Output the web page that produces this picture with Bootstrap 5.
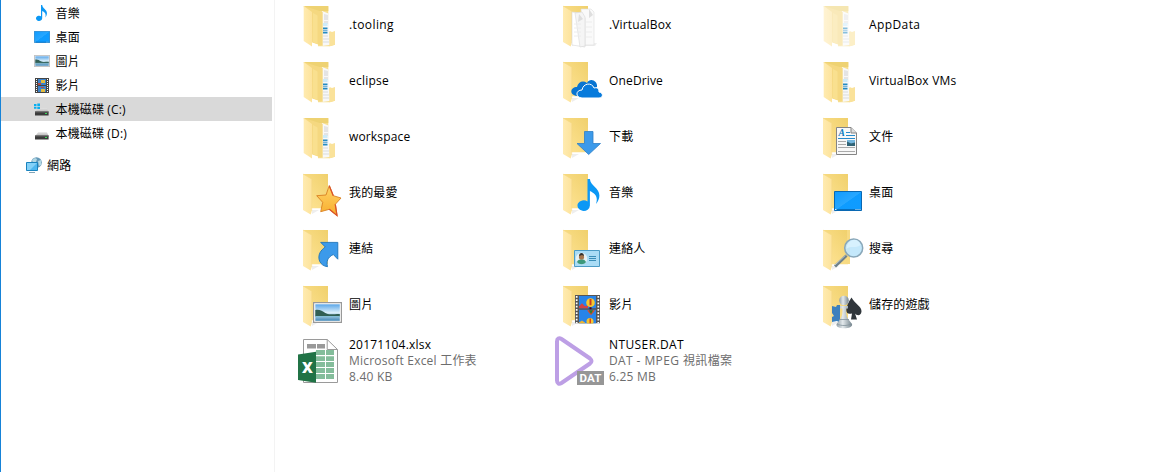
<!DOCTYPE html>
<html lang="zh-Hant">
<head>
<meta charset="utf-8">
<title>本機磁碟 (C:)</title>
<link href="https://cdn.jsdelivr.net/npm/bootstrap@5.3.0/dist/css/bootstrap.min.css" rel="stylesheet">
<style>
body{font:12px/16px "Open Sans","Noto Sans CJK TC",sans-serif;color:#000;background:#fff;height:472px;letter-spacing:.15px}
.tree{width:275px;border-left:1px solid #1683d8;border-right:1px solid #f3f3f3;padding-top:1px}
.tree-row{height:24px;width:271px;padding-left:33px;gap:5.5px}
.tree-row span{padding-top:1px}
.tree-row svg{width:16px;height:16px;flex:none}
.tree-row.picked{background:#d9d9d9}
.tree-row.root{padding-left:25px;margin-top:8px;gap:5px}
.files{display:grid;grid-template-columns:repeat(3,260px);grid-auto-rows:56px;margin-left:20px}
.tile{height:50px;gap:4px}
.tile>svg{width:50px;height:50px;flex:none;overflow:visible}
.meta{color:#6d6d6d}
.wide{letter-spacing:.4px}
.mid{letter-spacing:.22px}
</style>
</head>
<body class="d-flex overflow-hidden">
<svg width="0" height="0" class="position-absolute" aria-hidden="true">
<defs>
<linearGradient id="back" x1="0" y1="1" x2="1" y2="0"><stop offset="0" stop-color="#ffe597"/><stop offset="1" stop-color="#f0d06c"/></linearGradient>
<linearGradient id="flap" x1="0" y1="0" x2="1" y2="0"><stop offset="0" stop-color="#ffebb0"/><stop offset="1" stop-color="#fde39c"/></linearGradient>
<linearGradient id="blue" x1="0" y1="0" x2="1" y2="1"><stop offset="0" stop-color="#0f9bff"/><stop offset=".5" stop-color="#27a7ff"/><stop offset=".52" stop-color="#0e9cff"/><stop offset="1" stop-color="#109bff"/></linearGradient>
<linearGradient id="sky" x1="0" y1="0" x2="0" y2="1"><stop offset="0" stop-color="#5ba6e8"/><stop offset=".5" stop-color="#d9eefa"/><stop offset="1" stop-color="#4389b8"/></linearGradient>
<linearGradient id="gold" x1="0" y1="0" x2="0" y2="1"><stop offset="0" stop-color="#ffd467"/><stop offset="1" stop-color="#f8ad2d"/></linearGradient>
<linearGradient id="pawn" x1="0" y1="0" x2="1" y2="0"><stop offset="0" stop-color="#93a0a7"/><stop offset=".4" stop-color="#e3e9ec"/><stop offset="1" stop-color="#74848d"/></linearGradient>
<linearGradient id="metal" x1="0" y1="0" x2="0" y2="1"><stop offset="0" stop-color="#e2e2e2"/><stop offset="1" stop-color="#b4b4b4"/></linearGradient>
<symbol id="folder" viewBox="0 0 50 50">
<path d="M17 46l7-4h-7z" fill="#eee"/><path d="M8 6h25v34.300H13z" fill="url(#back)"/><path d="M8 6l8.700 5.200V43l-1 3.500L8 42z" fill="url(#flap)"/><path d="M8 6l8.700 5.200V43" fill="none" stroke="#f4d988" stroke-width=".5"/>
</symbol>
<symbol id="filled" viewBox="0 0 50 50">
<path d="M22 6.300h11.300V32H40v12.800l-5 1.500H23z" fill="#f7de8e"/><path d="M8.700 6h24.600v5H16z" fill="#eed272"/>
<path d="M27 11l6.500 2.500 1.200 31.500-8 1z" fill="#f8f8f8"/><path d="M29 14l4 1v5h-4zm0 7h4v3h-4z" fill="#e4e4e4"/><path d="M28 23h4.500v3H28z" fill="#cdebf8"/><path d="M28 27.500h4.500v1.500H28zM28 32h4.500v1.500H28z" fill="#268cc1"/><path d="M28 29.500h4.500v2H28z" fill="#75b4d8"/><path d="M28 36h5m-5 3h6m-6 3h6" stroke="#d9dcdd"/>
<path d="M34.500 31l2.500 1 3-1v13.800l-5.500 1.500z" fill="#fae29a"/>
<path d="M8.700 6l19 6v34l-10.400-3.500-3-2z" fill="#f5d880"/><path d="M18 13l4.500 2.500V44l-5-2z" fill="#f9e08f"/>
<path d="M8.700 6L17 12v34.500L8.700 41z" fill="url(#flap)"/>
</symbol>
<symbol id="note" viewBox="0 0 24 32"><path d="M11 0h2.400c.6 7 9.500 9 9.500 16.500 0 3-1.200 5.700-3.400 8.500 2.200-7.200-.3-10.200-6.100-13v14.500a6.200 5.300 0 1 1-2.400-4.100z" fill="#0b98f5"/></symbol>
<symbol id="desk" viewBox="0 0 28 20" preserveAspectRatio="none"><path d="M.5.5h27v19H.5z" fill="url(#blue)" stroke="#0968b3"/><path d="M1 18.500h26" stroke="#086fbd"/><path d="M1 18.500h1.500m19 0h1m1 0h1m1 0h1" stroke="#d8f2ff"/></symbol>
<symbol id="photo" viewBox="0 0 29 21" preserveAspectRatio="none"><path d="M.6.600h27.800v19.800H.6z" fill="#fff" stroke="#999" stroke-width="1.200"/><path d="M2.300 2.300h24.500v16.500H2.300z" fill="url(#sky)"/><path d="M2.300 8c4-1 7 1 10 3s7 1 14.500 1v2.500H2.300z" fill="#315f54"/><path d="M2.300 14.500h24.500" stroke="#83bfd6"/></symbol>
<symbol id="film" viewBox="0 0 25 28" preserveAspectRatio="none"><path d="M0 0h25v28H0z" fill="#555"/><path d="M1.700 1v27M23.300 1v27" stroke="#fff" stroke-width="1.700" stroke-dasharray="1.700 1.500"/><path d="M4 1h17v12H4zM4 14.500h17V28H4z" fill="#2884e9"/><path d="M4 13v-2l3-3 3 3 3-1v3z" fill="#d44346"/><circle cx="15.500" cy="7.500" r="4.300" fill="#f4c830"/><path d="M14.500 4h2v6h-2z" fill="#ce3f1e"/><path d="M15.500 12v2" stroke="#402" stroke-width="2"/><path d="M12 15h8l-4 5z" fill="#e1492b"/><path d="M14 15h4l-2 4z" fill="#2c7c35"/><path d="M4 27l3-2 3 2v1H4z" fill="#edb431"/><circle cx="15" cy="26" r="3.500" fill="#f6c52e"/><path d="M14.500 23h1.500v5h-1.500z" fill="#db431d"/></symbol>
<symbol id="smallfilm" viewBox="0 0 14 15"><path d="M0 0h14v15H0z" fill="#444"/><path d="M1.500 1v14M12.500 1v14" stroke="#fff" stroke-width="1" stroke-dasharray="1 1"/><path d="M3 1h8v6H3zM3 8h8v6H3z" fill="#3b82cb"/><path d="M3 5h3v2H3zM6 9h3v1H6z" fill="#b54b46"/><path d="M6 2h4v3H6zM6 11h4v3H6z" fill="#e4bc3d"/></symbol>
<symbol id="drive" viewBox="0 0 16 16"><path d="M4.200 7.200h8.700l2 4H1z" fill="url(#metal)"/><path d="M1 10.600h13.600v3.900H1z" fill="#3b3b3b"/><path d="M1 11h13.600" stroke="#626262"/><path d="M11 12h2v1h-2z" fill="#37da59"/></symbol>
</defs>
</svg>

<nav class="tree flex-shrink-0 d-flex flex-column">
<div class="tree-row d-flex align-items-center"><svg><use href="#note" x="1" y="0" width="13" height="16"/></svg><span>音樂</span></div>
<div class="tree-row d-flex align-items-center"><svg><use href="#desk" y="2" width="16" height="12"/></svg><span>桌面</span></div>
<div class="tree-row d-flex align-items-center"><svg><use href="#photo" y="2" width="16" height="12"/></svg><span>圖片</span></div>
<div class="tree-row d-flex align-items-center"><svg><use href="#smallfilm" x="1" y="1" width="14" height="15"/></svg><span>影片</span></div>
<div class="tree-row d-flex align-items-center picked"><svg><use href="#drive" width="16" height="16"/><path d="M0 3h2.500v2H0zM3.300 2.600H6V5H3.300zM0 5.800h2.500v2H0zM3.300 5.800H6v2.300H3.300z" fill="#08aef0"/></svg><span>本機磁碟 (C:)</span></div>
<div class="tree-row d-flex align-items-center"><svg><use href="#drive" width="16" height="16"/></svg><span>本機磁碟 (D:)</span></div>
<div class="tree-row root d-flex align-items-center"><svg><circle cx="10.500" cy="5.500" r="5.300" fill="#6599b8"/><path d="M6 3l3-2 2 1-1 3-3 1zm6 1l3-1v5l-2 1z" fill="#b2d8e5"/><path d="M.5 5.500h11v8H.5z" fill="#4eb7ef" stroke="#1983be"/><path d="M1 6h10L4 13H1z" fill="#83d1f8"/><path d="M3 15.500h6" stroke="#81a5b9"/></svg><span>網路</span></div>
</nav>

<main class="files align-content-start">
<div class="tile d-flex align-items-center"><svg><use href="#filled"/></svg><span class="wide">.tooling</span></div>
<div class="tile d-flex align-items-center"><svg viewBox="0 0 50 50"><use href="#folder"/><path d="M25 44l17-1-2 3H28z" fill="#eee"/><path d="M26 9h10l3 3v33H28z" fill="#fafafa" stroke="#ddd" stroke-width=".6"/><path d="M17 12l9 1 4 5v29l-13-2z" fill="#fff" stroke="#ddd" stroke-width=".7"/><path d="M20 13l7-1 3 5v29l-5 1z" fill="#f5f5f5" stroke="#d9d9d9" stroke-width=".6"/><path d="M24 14l-1 8 5-3zM34 9v9l4-3z" fill="#dedede"/><path d="M19 24h7m-7 4h7m-7 4h7m-7 4h7m5-14h6m-6 5h6m-6 5h6m-6 5h6" stroke="#ececec"/></svg><span>.VirtualBox</span></div>
<div class="tile d-flex align-items-center"><svg><use href="#filled" opacity=".55"/></svg><span class="wide">AppData</span></div>
<div class="tile d-flex align-items-center"><svg><use href="#filled"/></svg><span class="mid">eclipse</span></div>
<div class="tile d-flex align-items-center"><svg viewBox="0 0 50 50"><use href="#folder"/><path d="M22 40c-8-1-7-9 0-9 1-5 6-7 10-4 3-6 11-2 10 4z" fill="#0874d1"/><path d="M27 42c-7-.5-6.500-8 0-8 1-7 10-8 12-2 4-1 5 1 5 4 5 1 4 6 0 6z" fill="#087bdc" stroke="#fff" stroke-width="1"/></svg><span>OneDrive</span></div>
<div class="tile d-flex align-items-center"><svg><use href="#filled"/></svg><span class="mid">VirtualBox VMs</span></div>
<div class="tile d-flex align-items-center"><svg><use href="#filled"/></svg><span>workspace</span></div>
<div class="tile d-flex align-items-center"><svg viewBox="0 0 50 50"><use href="#folder"/><path d="M29.500 19.500H38v12h7.500L33.700 42.500 22 31.500h7.500z" fill="#3c9aea" stroke="#2d7fc6" stroke-width=".8"/></svg><span>下載</span></div>
<div class="tile d-flex align-items-center"><svg viewBox="0 0 50 50"><use href="#folder"/><path d="M21.500 15.500H36l5.500 5.500v21.500h-20z" fill="#f8f8f8" stroke="#858585"/><path d="M36 15.500V21h5.500" fill="#ddd" stroke="#858585"/><path d="M31 20.500h4m-4 3h9m-17 3h17" stroke="#258bcc"/><text x="23.500" y="24" font-family="Liberation Serif" font-size="9.500" font-style="italic" font-weight="700" fill="#0878bd">A</text><path d="M23 29.500h8m-8 3h8m-8 3h17m-17 4h17" stroke="#aaa"/><path d="M32 28h8v6h-8z" fill="#75b7df"/><path d="M32 29.500l4 2 4-1V34h-8z" fill="#316476"/></svg><span>文件</span></div>
<div class="tile d-flex align-items-center"><svg viewBox="0 0 50 50"><use href="#folder"/><path d="M34.300 17.500l4 10.200L46 30l-5.700 6.300L42 47.600l-7.700-6.300-8.600 2.400 2-9.400-6-6.600 9.300-.7z" fill="url(#gold)" stroke="#d98022" stroke-width=".9"/><path d="M34.300 18l4 9.700M40.300 36.300L42 47.500l-7.700-6.200" fill="none" stroke="#db5428" stroke-width="1.300"/></svg><span>我的最愛</span></div>
<div class="tile d-flex align-items-center"><svg viewBox="0 0 50 50"><use href="#folder"/><use href="#note" x="21.500" y="11" width="24" height="32"/></svg><span>音樂</span></div>
<div class="tile d-flex align-items-center"><svg viewBox="0 0 50 50"><use href="#folder"/><use href="#desk" x="19" y="23" width="28" height="20"/></svg><span>桌面</span></div>
<div class="tile d-flex align-items-center"><svg viewBox="0 0 50 50"><use href="#folder"/><path d="M25.700 18.400h17.100v16.800l-4.500-4.700c-6 3-7 7-5.800 12.200-8-1-10.300-8.700-7.500-14 1.200-2.300 3-4 5.300-5.700z" fill="#3c9aea" stroke="#1e75ba" stroke-width=".9"/></svg><span>連結</span></div>
<div class="tile d-flex align-items-center"><svg viewBox="0 0 50 50"><use href="#folder"/><path d="M19.500 26.500h25v16h-25z" fill="#aadcf5" stroke="#4d9cc5"/><circle cx="26.500" cy="34.500" r="5.700" fill="#e8f2f4"/><path d="M22 38c1-3 7-4 9 0-2 3-7 3-9 0z" fill="#3c997c"/><circle cx="26.500" cy="33" r="2.600" fill="#a6764c"/><path d="M24 32c0-4 5-4 5 0l-2-1z" fill="#33302c"/><path d="M34 32.500h7m-7 2h7m-7 2h7" stroke="#3b8fb8"/></svg><span>連絡人</span></div>
<div class="tile d-flex align-items-center"><svg viewBox="0 0 50 50"><use href="#folder"/><path d="M32 6h3v34h-3z" fill="#f7da83"/><path d="M31.500 31.500L20 42.300" stroke="#6e8089" stroke-width="3"/><path d="M30.500 31.200L20 41" stroke="#c5d0d3" stroke-width=".9"/><circle cx="38.700" cy="24" r="9" fill="#bfe6fb" fill-opacity=".92" stroke="#89a7b9" stroke-width="1.500"/><path d="M31.500 25c4-4 9 0 14-4-2-9-14-6-14 4z" fill="#dcf3ff" opacity=".8"/></svg><span>搜尋</span></div>
<div class="tile d-flex align-items-center"><svg viewBox="0 0 50 50"><use href="#folder"/><use href="#photo" x="18" y="22" width="29" height="21"/></svg><span>圖片</span></div>
<div class="tile d-flex align-items-center"><svg viewBox="0 0 50 50"><use href="#folder"/><use href="#film" x="20" y="15" width="25" height="28.500"/></svg><span>影片</span></div>
<div class="tile d-flex align-items-center"><svg viewBox="0 0 50 50"><use href="#folder"/><path d="M17 26l4 1 1-2h3v18l-3-2-5 1v-5l2-1-2-3z" fill="#3d80bd"/><path d="M36.500 17.500c3 6 10.500 9 10 14-.5 5-5 4-6.500 2l2 6h-6l1-6c-7 2-8-5-.5-16z" fill="#30363b"/><path d="M25 26h8v2.500h-2c0 6 .5 8 2.500 11l3.500 4.500c2 5.500-17 6-15.500 0l3.500-4.500c2-3 2.500-5 2.500-11H25z" fill="url(#pawn)"/><circle cx="29" cy="20.500" r="4.800" fill="url(#pawn)"/><path d="M24 39.500h10M22 44c4 2 10 2 14.500 0" stroke="#82929b" stroke-width=".8" fill="none"/></svg><span>儲存的遊戲</span></div>
<div class="tile d-flex align-items-center"><svg viewBox="0 0 50 50"><path d="M8.500 3.500h23.700l10.300 10v33h-34z" fill="#fff" stroke="#9a9a9a"/><path d="M32.200 3.500v10h10.300" fill="none" stroke="#9a9a9a"/><path d="M12 8h9v4.500h-9zm10 0h8v4.500h-8z" fill="#999"/><path d="M21 14h9v5h-9zm10 0h8v5h-8zM21 20.300h9v4.700h-9zm10 0h8v4.700h-8zM21 26h9v5h-9zm10 0h8v5h-8zM21 32h9v5h-9zm10 0h8v5h-8zM21 38h9v5h-9zm10 0h8v5h-8z" fill="#84bd9b"/><path d="M3 18.500l18-2.800v31L3 44z" fill="#217346"/><text x="7" y="36.500" font-family="Open Sans" font-weight="800" font-size="15" fill="#fff">X</text></svg><div><div class="mid">20171104.xlsx</div><div class="meta mid">Microsoft Excel 工作表</div><div class="meta mid">8.40 KB</div></div></div>
<div class="tile d-flex align-items-center"><svg viewBox="0 0 50 50"><path d="M2 5.500c0-3 2-4 4.500-2.500L35 22.500c2 1.500 2 3.500 0 5L6.500 47C4 48.500 2 47.500 2 44.500z" fill="#fff" stroke="#bd9fe5" stroke-width="4"/><path d="M22 35h27v14H22z" fill="#969696"/><text x="24.500" y="46" font-family="Roboto" font-weight="700" font-size="11.500" textLength="22" lengthAdjust="spacingAndGlyphs" fill="#fff">DAT</text></svg><div><div class="wide">NTUSER.DAT</div><div class="meta wide">DAT - MPEG 視訊檔案</div><div class="meta mid">6.25 MB</div></div></div>
</main>
<script src="https://cdn.jsdelivr.net/npm/bootstrap@5.3.0/dist/js/bootstrap.bundle.min.js"></script>
</body>
</html>
